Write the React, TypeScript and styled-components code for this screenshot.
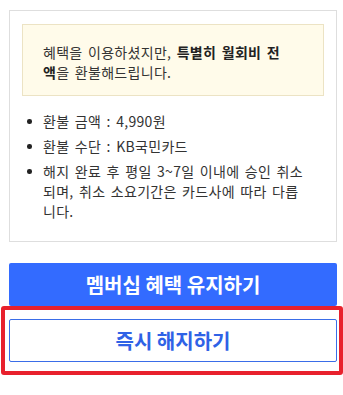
import React from "react";
import styled, { createGlobalStyle } from "styled-components";

const GlobalStyle = createGlobalStyle`
  html, body { margin: 0; padding: 0; background: #ffffff; }
  body {
    font-family: "Noto Sans CJK KR", "Noto Sans", sans-serif;
    color: #333333;
    -webkit-font-smoothing: antialiased;
  }
`;

const Page = styled.div`
  padding: 10px 6px 19px 9px;
  width: 343px;
  box-sizing: border-box;
`;

const Card = styled.section`
  border: 1px solid #dedede;
  padding: 13px 12px 20px 12px;
  background: #ffffff;
`;

const Notice = styled.p`
  margin: 0;
  background: #fffbea;
  border: 1px solid #ece3c4;
  padding: 17px 33px 13px 20px;
  font-size: 14px;
  line-height: 20px;
  letter-spacing: 0.3px;
  word-spacing: 2px;
  color: #333333;
`;

const Strong = styled.strong`
  font-weight: 700;
  color: #222222;
`;

const List = styled.ul`
  list-style: none;
  margin: 15px 0 0 0;
  padding: 0 14px 0 0;
`;

const Item = styled.li`
  display: flex;
  font-size: 14px;
  line-height: 20px;
  letter-spacing: 0.3px;
  word-spacing: 2px;
  color: #333333;
  & + & {
    margin-top: 5px;
  }
`;

const Bullet = styled.span`
  flex: 0 0 21px;
  position: relative;
  &::before {
    content: "";
    position: absolute;
    left: 5px;
    top: 8px;
    width: 4.5px;
    height: 4.5px;
    border-radius: 50%;
    background: #222222;
  }
`;

const ItemText = styled.span`
  flex: 1;
`;

const Button = styled.button<{ $variant: "primary" | "outline" }>`
  display: block;
  width: 100%;
  height: 43px;
  margin: 0;
  box-sizing: border-box;
  font-family: "Noto Sans CJK KR", "Noto Sans", sans-serif;
  font-size: 20px;
  font-weight: 700;
  border-radius: 2px;
  cursor: pointer;
  background: ${(p) => (p.$variant === "primary" ? "#336bff" : "#ffffff")};
  color: ${(p) => (p.$variant === "primary" ? "#ffffff" : "#2f62e6")};
  border: ${(p) => (p.$variant === "primary" ? "none" : "1px solid #3a6de8")};
`;

const PrimaryWrap = styled.div`
  margin-top: 21px;
`;

const HighlightWrap = styled.div`
  position: relative;
  margin-top: 13px;
`;

const Highlight = styled.div`
  position: absolute;
  top: -13px;
  left: -8px;
  right: -6px;
  bottom: -13px;
  border: 4px solid #e8212d;
  border-radius: 3px;
  pointer-events: none;
`;

export default function App() {
  return (
    <>
      <GlobalStyle />
      <Page>
        <Card>
          <Notice>
            혜택을 이용하셨지만, <Strong>특별히 월회비 전액</Strong>을 환불해드립니다.
          </Notice>
          <List>
            <Item>
              <Bullet />
              <ItemText>환불 금액 : 4,990원</ItemText>
            </Item>
            <Item>
              <Bullet />
              <ItemText>환불 수단 : KB국민카드</ItemText>
            </Item>
            <Item>
              <Bullet />
              <ItemText>
                해지 완료 후 평일 3~7일 이내에 승인 취소되며, 취소 소요기간은 카드사에 따라 다릅니다.
              </ItemText>
            </Item>
          </List>
        </Card>
        <PrimaryWrap>
          <Button $variant="primary">멤버십 혜택 유지하기</Button>
        </PrimaryWrap>
        <HighlightWrap>
          <Button $variant="outline">즉시 해지하기</Button>
          <Highlight />
        </HighlightWrap>
      </Page>
    </>
  );
}
